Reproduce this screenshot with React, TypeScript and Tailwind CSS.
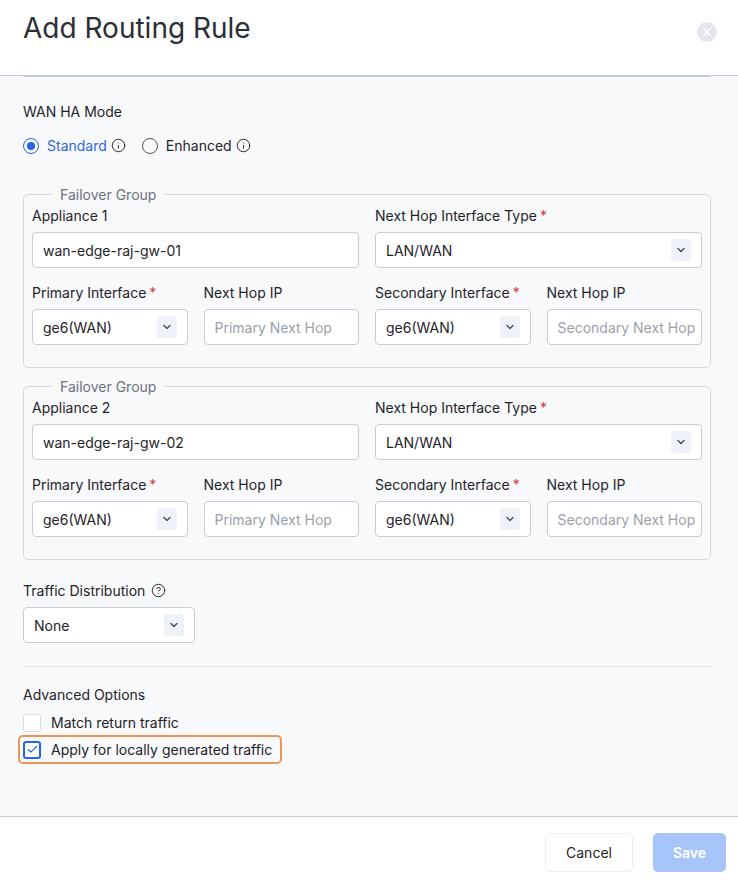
import { ChevronDown, X, Info, CircleHelp, Check } from "lucide-react";

function Label({ text, req }: { text: string; req?: boolean }) {
  return (
    <div className="mb-[8px] h-[17px] text-[14px] leading-[17px] text-[#1f2329]">
      {text}
      {req && <span className="ml-[3px] text-[#d43a3a]">*</span>}
    </div>
  );
}

function Select({ value, w }: { value: string; w?: string }) {
  return (
    <div className={`flex h-[36px] items-center justify-between rounded-[4px] border border-[#c8ccd3] bg-white pl-[10px] pr-[10px] text-[14px] text-[#1f2329] ${w ?? ""}`}>
      <span>{value}</span>
      <span className="flex h-[22px] w-[20px] items-center justify-center rounded-[3px] bg-[#eef2f8]">
        <ChevronDown className="h-[12px] w-[12px] text-[#4b5563]" strokeWidth={3} />
      </span>
    </div>
  );
}

function Input({ value, placeholder }: { value?: string; placeholder?: string }) {
  return (
    <div className="flex h-[36px] items-center overflow-hidden whitespace-nowrap rounded-[4px] border border-[#c8ccd3] bg-white px-[10px] text-[14px]">
      {value ? <span className="text-[#1f2329]">{value}</span> : <span className="text-[#9aa1ab]">{placeholder}</span>}
    </div>
  );
}

function Group({ n, host }: { n: number; host: string }) {
  return (
    <fieldset className="rounded-[5px] border border-[#d4d8de] px-[8px] pb-[22px] pt-[2px]">
      <legend className="ml-[20px] px-[8px] text-[14px] text-[#6b7280]">Failover Group</legend>
      <div className="grid grid-cols-2 gap-x-[16px]">
        <div>
          <Label text={`Appliance ${n}`} />
          <Input value={host} />
        </div>
        <div>
          <Label text="Next Hop Interface Type" req />
          <Select value="LAN/WAN" />
        </div>
      </div>
      <div className="mt-[16px] grid grid-cols-4 gap-x-[16px]">
        <div>
          <Label text="Primary Interface" req />
          <Select value="ge6(WAN)" />
        </div>
        <div>
          <Label text="Next Hop IP" />
          <Input placeholder="Primary Next Hop" />
        </div>
        <div>
          <Label text="Secondary Interface" req />
          <Select value="ge6(WAN)" />
        </div>
        <div>
          <Label text="Next Hop IP" />
          <Input placeholder="Secondary Next Hop" />
        </div>
      </div>
    </fieldset>
  );
}

export default function App() {
  return (
    <div className="flex h-[888px] w-[738px] flex-col bg-white" style={{ fontFamily: "Inter, 'Liberation Sans', sans-serif" }}>
      <div className="flex h-[76px] shrink-0 items-start justify-between border-b border-[#c5cad3] pl-[23px] pr-[21px] pt-[10px]">
        <h1 className="text-[28px] leading-[36px] text-[#2b2f36]">Add Routing Rule</h1>
        <span className="mt-[12px] flex h-[20px] w-[20px] items-center justify-center rounded-full bg-[#e3e6ea]">
          <X className="h-[12px] w-[12px] text-white" strokeWidth={3} />
        </span>
      </div>
      <div className="flex-1 bg-[#f8f9fb] pl-[23px] pr-[27px]">
        <div className="h-[1px] rounded-b border-b border-[#c5cad3]" />
        <div className="mt-[26px] text-[14px] leading-[17px] text-[#1f2329]">WAN HA Mode</div>
        <div className="mt-[15px] flex items-center text-[14px]">
          <span className="flex h-[16px] w-[16px] items-center justify-center rounded-full border border-[#2563eb]">
            <span className="h-[8px] w-[8px] rounded-full bg-[#2563eb]" />
          </span>
          <span className="ml-[8px] text-[#2f67e0]">Standard</span>
          <Info className="ml-[4px] h-[15px] w-[15px] text-[#222]" strokeWidth={1.5} />
          <span className="ml-[16px] h-[16px] w-[16px] rounded-full border border-[#555]" />
          <span className="ml-[8px] text-[#1f2329]">Enhanced</span>
          <Info className="ml-[4px] h-[15px] w-[15px] text-[#222]" strokeWidth={1.5} />
        </div>
        <div className="mt-[28px]">
          <Group n={1} host="wan-edge-raj-gw-01" />
        </div>
        <div className="mt-[8px]">
          <Group n={2} host="wan-edge-raj-gw-02" />
        </div>
        <div className="mt-[22px] flex items-center text-[14px] leading-[17px] text-[#1f2329]">
          Traffic Distribution
          <CircleHelp className="ml-[6px] h-[15px] w-[15px] text-[#222]" strokeWidth={1.5} />
        </div>
        <div className="mt-[8px]">
          <Select value="None" w="w-[172px]" />
        </div>
        <div className="mt-[23px] border-t border-[#dcdfe4]" />
        <div className="mt-[19px] text-[14px] leading-[17px] text-[#1f2329]">Advanced Options</div>
        <div className="mt-[9px] flex items-center text-[14px] text-[#1f2329]">
          <span className="h-[18px] w-[18px] rounded-[3px] border border-[#d8dde5] bg-white" />
          <span className="ml-[10px]">Match return traffic</span>
        </div>
        <div className="ml-[-5px] mt-[2px] inline-flex items-center rounded-[5px] border-2 border-[#f0955a] py-[2px] pl-[3px] pr-[8px] text-[14px] text-[#1f2329]">
          <span className="flex h-[18px] w-[18px] items-center justify-center rounded-[3px] border-2 border-[#2563eb] bg-white">
            <Check className="h-[13px] w-[13px] text-[#2563eb]" strokeWidth={2} />
          </span>
          <span className="ml-[10px]">Apply for locally generated traffic</span>
        </div>
      </div>
      <div className="flex h-[72px] shrink-0 items-center justify-end gap-[20px] border-t border-[#c5cad3] pr-[12px]">
        <button className="h-[39px] w-[88px] rounded-[5px] border border-[#eceef1] bg-white text-[14px] text-[#1f2329]">Cancel</button>
        <button className="h-[39px] w-[73px] rounded-[5px] bg-[#a8c5fb] text-[14px] font-semibold text-white">Save</button>
      </div>
    </div>
  );
}
